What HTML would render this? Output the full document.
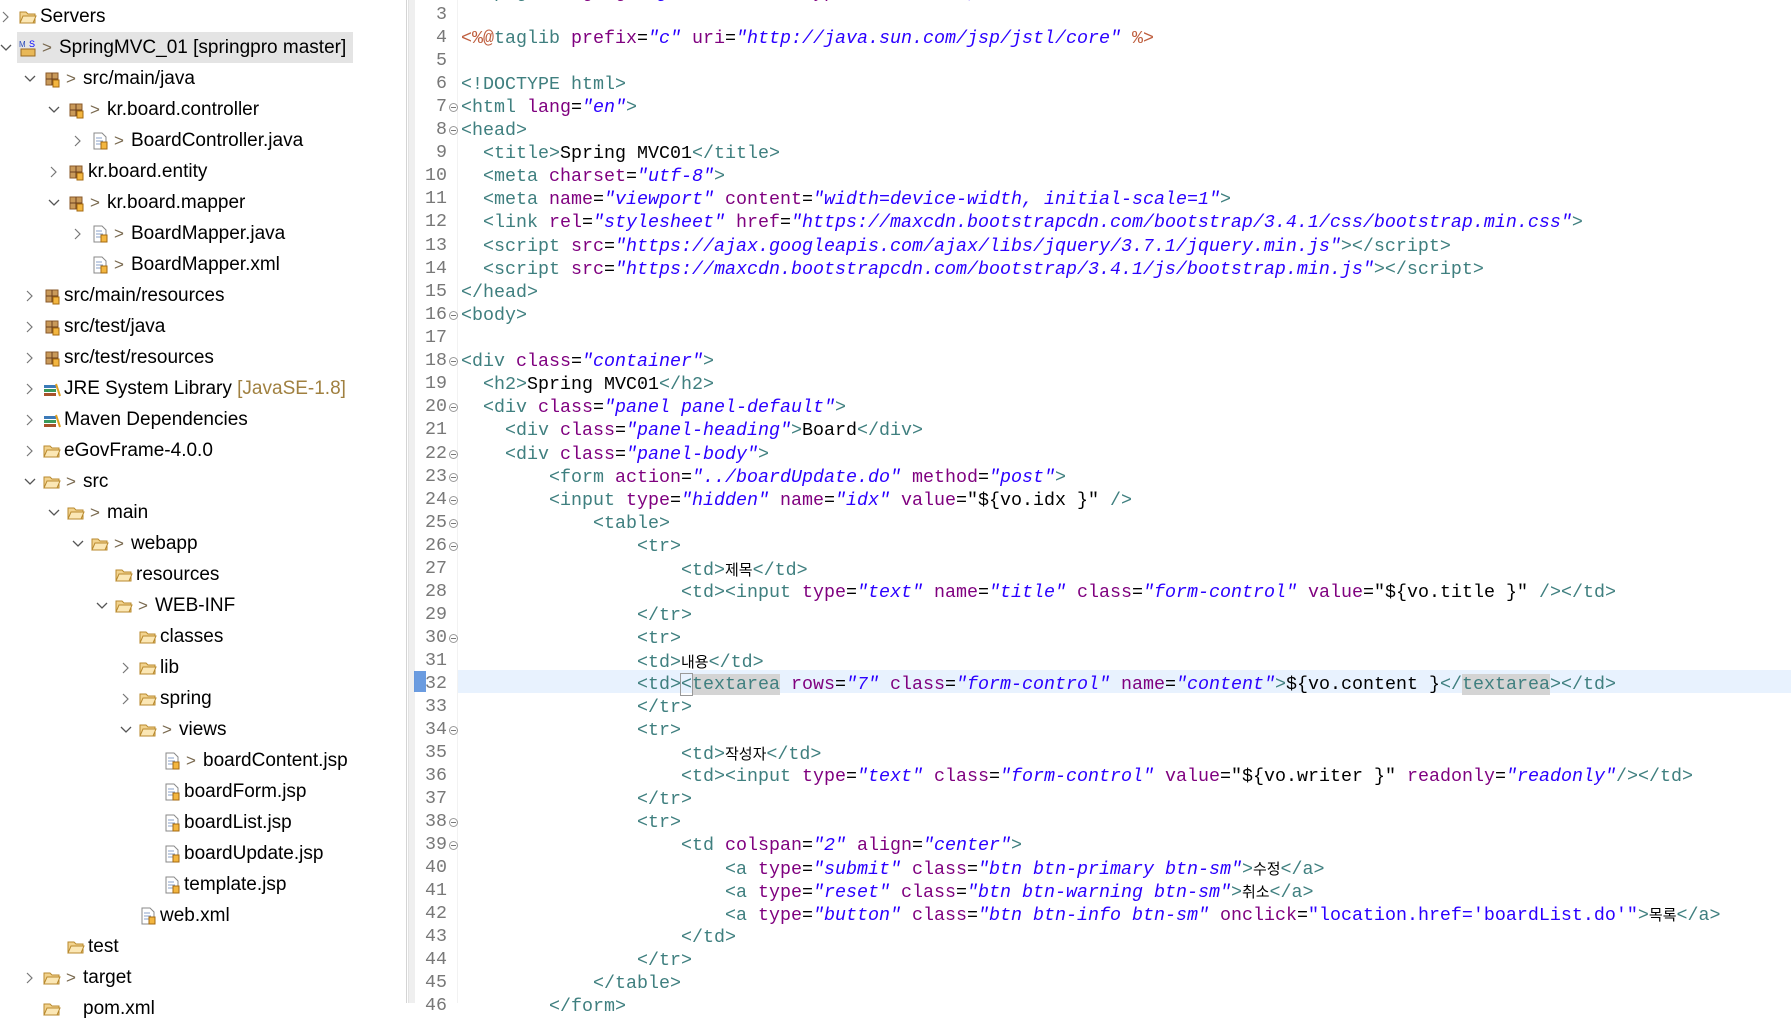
<!DOCTYPE html>
<html><head><meta charset="utf-8">
<style>
*{margin:0;padding:0;box-sizing:border-box}
body{width:1791px;height:1003px;overflow:hidden;background:#fff;position:relative;font-family:"Liberation Sans","Noto Sans CJK KR",sans-serif}
#side{position:absolute;left:0;top:0;width:407px;height:1003px;background:#fff;border-right:1px solid #d4d4d4}
.r{position:absolute;height:31px;line-height:31px;font-size:19px;color:#000;white-space:nowrap;transform:translateY(3px)}
.ch{position:absolute;top:0;width:12px;height:31px}
.ic{position:absolute;top:7px;width:18px;height:18px}
.ar{position:absolute;top:0;color:#7a6a50;font-size:17px}
.tx{position:absolute;top:0}
#sel{position:absolute;left:17px;top:32px;width:336px;height:31px;background:#e4e4e4}
#strip{position:absolute;left:408px;top:0;width:7px;height:1003px;background:#efefef;border-left:1px solid #e2e2e2}
#gutline{position:absolute;left:457px;top:0;width:1px;height:1003px;background:#f2f2f2}
#hl{position:absolute;left:458px;top:670px;width:1333px;height:23px;background:#e8f2fe}
#mark{position:absolute;left:414px;top:671px;width:12px;height:21px;background:#3a7bd5;opacity:.75}
.ln{position:absolute;left:415px;width:32px;text-align:right;font-family:"Liberation Mono",monospace;font-size:18.3px;line-height:23px;color:#787878;transform:translateY(3px)}
.fm{position:absolute;left:449px;width:9px;height:9px;border:1px solid #999;border-radius:50%;font-size:0;transform:translateY(3px)}
.fm:after{content:"";position:absolute;left:1px;top:3px;width:5px;height:1px;background:#777}
.c{position:absolute;left:461px;font-family:"Liberation Mono","Noto Sans CJK KR",monospace;font-size:18.33px;line-height:23px;white-space:pre;color:#000;transform:translateY(3px)}
.t{color:#3f7f7f}.a{color:#7f007f}.v{color:#2a00ff;font-style:italic}.d{color:#bf5f3f}.u{color:#2a00ff}
.k{font-family:"Noto Sans CJK KR",sans-serif;font-size:15px}
.g{background:#d4d4d4}
.bx{outline:1px solid #999}
</style></head><body>
<div id="side">
<div id="sel"></div>
<svg width="0" height="0" style="position:absolute">
<defs>
<symbol id="chr" viewBox="0 0 12 31"><path d="M3 11l5 5-5 5" fill="none" stroke="#777" stroke-width="1.2"/></symbol>
<symbol id="chd" viewBox="0 0 12 31"><path d="M1 13l5 5 5-5" fill="none" stroke="#555" stroke-width="1.3"/></symbol>
<symbol id="fold" viewBox="0 0 18 18"><path d="M1 4h6l2 2h7v9H1z" fill="#f2d38e" stroke="#b98a2e"/><path d="M1 15l3-7h13l-3 7z" fill="#fbe7b5" stroke="#b98a2e"/></symbol>
<symbol id="pkg" viewBox="0 0 18 18"><rect x="3" y="3" width="12" height="12" fill="#c99a5a" stroke="#8a5a2a"/><path d="M9 3v12M3 9h12" stroke="#6b4020"/><rect x="10" y="10" width="6" height="7" fill="#f3b640" stroke="#a46a10"/></symbol>
<symbol id="file" viewBox="0 0 18 18"><path d="M3 1h8l4 4v12H3z" fill="#fff" stroke="#888"/><path d="M5 6h6M5 9h7M5 12h5" stroke="#8aa0c8"/><rect x="10" y="10" width="6" height="7" fill="#f3b640" stroke="#a46a10"/></symbol>
<symbol id="lib" viewBox="0 0 18 18"><rect x="1" y="5" width="12" height="3" fill="#3c7ab8"/><rect x="1" y="9" width="12" height="3" fill="#3a9a5a"/><rect x="1" y="13" width="12" height="3" fill="#a8522a"/><path d="M13 4l4 12" stroke="#e0a020" stroke-width="2"/></symbol>
<symbol id="proj" viewBox="0 0 18 18"><text x="0" y="8" font-size="8" fill="#2a4ab8" font-family="Liberation Sans">M</text><text x="10" y="8" font-size="9" fill="#00f" font-family="Liberation Sans">S</text><rect x="2" y="10" width="14" height="7" fill="#e8b858" stroke="#9a6a20"/></symbol>
</defs></svg>

<div class="r" style="top:-2px;left:0"><svg class="ch" style="left:0"><use href="#chr"/></svg><svg class="ic" style="left:19px"><use href="#fold"/></svg><span class="tx" style="left:40px">Servers</span></div>
<div class="r" style="top:29px;left:0"><svg class="ch" style="left:0"><use href="#chd"/></svg><svg class="ic" style="left:19px"><use href="#proj"/></svg><span class="ar" style="left:42px">&gt;</span><span class="tx" style="left:59px">SpringMVC_01 [springpro master]</span></div>
<div class="r" style="top:60px;left:24px"><svg class="ch" style="left:0"><use href="#chd"/></svg><svg class="ic" style="left:19px"><use href="#pkg"/></svg><span class="ar" style="left:42px">&gt;</span><span class="tx" style="left:59px">src/main/java</span></div>
<div class="r" style="top:91px;left:48px"><svg class="ch" style="left:0"><use href="#chd"/></svg><svg class="ic" style="left:19px"><use href="#pkg"/></svg><span class="ar" style="left:42px">&gt;</span><span class="tx" style="left:59px">kr.board.controller</span></div>
<div class="r" style="top:122px;left:72px"><svg class="ch" style="left:0"><use href="#chr"/></svg><svg class="ic" style="left:19px"><use href="#file"/></svg><span class="ar" style="left:42px">&gt;</span><span class="tx" style="left:59px">BoardController.java</span></div>
<div class="r" style="top:153px;left:48px"><svg class="ch" style="left:0"><use href="#chr"/></svg><svg class="ic" style="left:19px"><use href="#pkg"/></svg><span class="tx" style="left:40px">kr.board.entity</span></div>
<div class="r" style="top:184px;left:48px"><svg class="ch" style="left:0"><use href="#chd"/></svg><svg class="ic" style="left:19px"><use href="#pkg"/></svg><span class="ar" style="left:42px">&gt;</span><span class="tx" style="left:59px">kr.board.mapper</span></div>
<div class="r" style="top:215px;left:72px"><svg class="ch" style="left:0"><use href="#chr"/></svg><svg class="ic" style="left:19px"><use href="#file"/></svg><span class="ar" style="left:42px">&gt;</span><span class="tx" style="left:59px">BoardMapper.java</span></div>
<div class="r" style="top:246px;left:72px"><svg class="ic" style="left:19px"><use href="#file"/></svg><span class="ar" style="left:42px">&gt;</span><span class="tx" style="left:59px">BoardMapper.xml</span></div>
<div class="r" style="top:277px;left:24px"><svg class="ch" style="left:0"><use href="#chr"/></svg><svg class="ic" style="left:19px"><use href="#pkg"/></svg><span class="tx" style="left:40px">src/main/resources</span></div>
<div class="r" style="top:308px;left:24px"><svg class="ch" style="left:0"><use href="#chr"/></svg><svg class="ic" style="left:19px"><use href="#pkg"/></svg><span class="tx" style="left:40px">src/test/java</span></div>
<div class="r" style="top:339px;left:24px"><svg class="ch" style="left:0"><use href="#chr"/></svg><svg class="ic" style="left:19px"><use href="#pkg"/></svg><span class="tx" style="left:40px">src/test/resources</span></div>
<div class="r" style="top:370px;left:24px"><svg class="ch" style="left:0"><use href="#chr"/></svg><svg class="ic" style="left:19px"><use href="#lib"/></svg><span class="tx" style="left:40px">JRE System Library <span style="color:#a08040">[JavaSE-1.8]</span></span></div>
<div class="r" style="top:401px;left:24px"><svg class="ch" style="left:0"><use href="#chr"/></svg><svg class="ic" style="left:19px"><use href="#lib"/></svg><span class="tx" style="left:40px">Maven Dependencies</span></div>
<div class="r" style="top:432px;left:24px"><svg class="ch" style="left:0"><use href="#chr"/></svg><svg class="ic" style="left:19px"><use href="#fold"/></svg><span class="tx" style="left:40px">eGovFrame-4.0.0</span></div>
<div class="r" style="top:463px;left:24px"><svg class="ch" style="left:0"><use href="#chd"/></svg><svg class="ic" style="left:19px"><use href="#fold"/></svg><span class="ar" style="left:42px">&gt;</span><span class="tx" style="left:59px">src</span></div>
<div class="r" style="top:494px;left:48px"><svg class="ch" style="left:0"><use href="#chd"/></svg><svg class="ic" style="left:19px"><use href="#fold"/></svg><span class="ar" style="left:42px">&gt;</span><span class="tx" style="left:59px">main</span></div>
<div class="r" style="top:525px;left:72px"><svg class="ch" style="left:0"><use href="#chd"/></svg><svg class="ic" style="left:19px"><use href="#fold"/></svg><span class="ar" style="left:42px">&gt;</span><span class="tx" style="left:59px">webapp</span></div>
<div class="r" style="top:556px;left:96px"><svg class="ic" style="left:19px"><use href="#fold"/></svg><span class="tx" style="left:40px">resources</span></div>
<div class="r" style="top:587px;left:96px"><svg class="ch" style="left:0"><use href="#chd"/></svg><svg class="ic" style="left:19px"><use href="#fold"/></svg><span class="ar" style="left:42px">&gt;</span><span class="tx" style="left:59px">WEB-INF</span></div>
<div class="r" style="top:618px;left:120px"><svg class="ic" style="left:19px"><use href="#fold"/></svg><span class="tx" style="left:40px">classes</span></div>
<div class="r" style="top:649px;left:120px"><svg class="ch" style="left:0"><use href="#chr"/></svg><svg class="ic" style="left:19px"><use href="#fold"/></svg><span class="tx" style="left:40px">lib</span></div>
<div class="r" style="top:680px;left:120px"><svg class="ch" style="left:0"><use href="#chr"/></svg><svg class="ic" style="left:19px"><use href="#fold"/></svg><span class="tx" style="left:40px">spring</span></div>
<div class="r" style="top:711px;left:120px"><svg class="ch" style="left:0"><use href="#chd"/></svg><svg class="ic" style="left:19px"><use href="#fold"/></svg><span class="ar" style="left:42px">&gt;</span><span class="tx" style="left:59px">views</span></div>
<div class="r" style="top:742px;left:144px"><svg class="ic" style="left:19px"><use href="#file"/></svg><span class="ar" style="left:42px">&gt;</span><span class="tx" style="left:59px">boardContent.jsp</span></div>
<div class="r" style="top:773px;left:144px"><svg class="ic" style="left:19px"><use href="#file"/></svg><span class="tx" style="left:40px">boardForm.jsp</span></div>
<div class="r" style="top:804px;left:144px"><svg class="ic" style="left:19px"><use href="#file"/></svg><span class="tx" style="left:40px">boardList.jsp</span></div>
<div class="r" style="top:835px;left:144px"><svg class="ic" style="left:19px"><use href="#file"/></svg><span class="tx" style="left:40px">boardUpdate.jsp</span></div>
<div class="r" style="top:866px;left:144px"><svg class="ic" style="left:19px"><use href="#file"/></svg><span class="tx" style="left:40px">template.jsp</span></div>
<div class="r" style="top:897px;left:120px"><svg class="ic" style="left:19px"><use href="#file"/></svg><span class="tx" style="left:40px">web.xml</span></div>
<div class="r" style="top:928px;left:48px"><svg class="ic" style="left:19px"><use href="#fold"/></svg><span class="tx" style="left:40px">test</span></div>
<div class="r" style="top:959px;left:24px"><svg class="ch" style="left:0"><use href="#chr"/></svg><svg class="ic" style="left:19px"><use href="#fold"/></svg><span class="ar" style="left:42px">&gt;</span><span class="tx" style="left:59px">target</span></div>
<div class="r" style="top:990px;left:24px"><svg class="ic" style="left:19px"><use href="#fold"/></svg><span class="tx" style="left:59px">pom.xml</span></div>
</div>

<div id="strip"></div>
<div id="gutline"></div>
<div id="hl"></div>
<div id="mark"></div>

<div class="ln" style="top:-22px">2</div><div class="ln" style="top:1px">3</div><div class="ln" style="top:24px">4</div><div class="ln" style="top:47px">5</div><div class="ln" style="top:70px">6</div><div class="ln" style="top:93px">7</div><div class="ln" style="top:116px">8</div><div class="ln" style="top:139px">9</div><div class="ln" style="top:162px">10</div><div class="ln" style="top:185px">11</div><div class="ln" style="top:208px">12</div><div class="ln" style="top:232px">13</div><div class="ln" style="top:255px">14</div><div class="ln" style="top:278px">15</div><div class="ln" style="top:301px">16</div><div class="ln" style="top:324px">17</div><div class="ln" style="top:347px">18</div><div class="ln" style="top:370px">19</div><div class="ln" style="top:393px">20</div><div class="ln" style="top:416px">21</div><div class="ln" style="top:440px">22</div><div class="ln" style="top:463px">23</div><div class="ln" style="top:486px">24</div><div class="ln" style="top:509px">25</div><div class="ln" style="top:532px">26</div><div class="ln" style="top:555px">27</div><div class="ln" style="top:578px">28</div><div class="ln" style="top:601px">29</div><div class="ln" style="top:624px">30</div><div class="ln" style="top:647px">31</div><div class="ln" style="top:670px">32</div><div class="ln" style="top:693px">33</div><div class="ln" style="top:716px">34</div><div class="ln" style="top:739px">35</div><div class="ln" style="top:762px">36</div><div class="ln" style="top:785px">37</div><div class="ln" style="top:808px">38</div><div class="ln" style="top:831px">39</div><div class="ln" style="top:854px">40</div><div class="ln" style="top:877px">41</div><div class="ln" style="top:900px">42</div><div class="ln" style="top:923px">43</div><div class="ln" style="top:946px">44</div><div class="ln" style="top:969px">45</div><div class="ln" style="top:992px">46</div>

<div class="fm" style="top:100px"></div><div class="fm" style="top:123px"></div><div class="fm" style="top:308px"></div><div class="fm" style="top:354px"></div><div class="fm" style="top:400px"></div><div class="fm" style="top:447px"></div><div class="fm" style="top:470px"></div><div class="fm" style="top:493px"></div><div class="fm" style="top:516px"></div><div class="fm" style="top:539px"></div><div class="fm" style="top:631px"></div><div class="fm" style="top:723px"></div><div class="fm" style="top:815px"></div><div class="fm" style="top:838px"></div>

<div class="c" style="top:-22px"><span class="d">&lt;%@</span><span class="t">page</span> <span class="a">language</span>=<span class="v">"java"</span> <span class="a">contentType</span>=<span class="v">"text/html; charset=UTF-8"</span></div>
<div class="c" style="top:24px"><span class="d">&lt;%@</span><span class="t">taglib</span> <span class="a">prefix</span>=<span class="v">"c"</span> <span class="a">uri</span>=<span class="v">"http://java.sun.com/jsp/jstl/core"</span> <span class="d">%&gt;</span></div>
<div class="c" style="top:70px"><span class="t">&lt;!DOCTYPE html&gt;</span></div>
<div class="c" style="top:93px"><span class="t">&lt;html</span> <span class="a">lang</span>=<span class="v">"en"</span><span class="t">&gt;</span></div>
<div class="c" style="top:116px"><span class="t">&lt;head&gt;</span></div>
<div class="c" style="top:139px">  <span class="t">&lt;title&gt;</span>Spring MVC01<span class="t">&lt;/title&gt;</span></div>
<div class="c" style="top:162px">  <span class="t">&lt;meta</span> <span class="a">charset</span>=<span class="v">"utf-8"</span><span class="t">&gt;</span></div>
<div class="c" style="top:185px">  <span class="t">&lt;meta</span> <span class="a">name</span>=<span class="v">"viewport"</span> <span class="a">content</span>=<span class="v">"width=device-width, initial-scale=1"</span><span class="t">&gt;</span></div>
<div class="c" style="top:208px">  <span class="t">&lt;link</span> <span class="a">rel</span>=<span class="v">"stylesheet"</span> <span class="a">href</span>=<span class="v">"https://maxcdn.bootstrapcdn.com/bootstrap/3.4.1/css/bootstrap.min.css"</span><span class="t">&gt;</span></div>
<div class="c" style="top:232px">  <span class="t">&lt;script</span> <span class="a">src</span>=<span class="v">"https://ajax.googleapis.com/ajax/libs/jquery/3.7.1/jquery.min.js"</span><span class="t">&gt;&lt;/script&gt;</span></div>
<div class="c" style="top:255px">  <span class="t">&lt;script</span> <span class="a">src</span>=<span class="v">"https://maxcdn.bootstrapcdn.com/bootstrap/3.4.1/js/bootstrap.min.js"</span><span class="t">&gt;&lt;/script&gt;</span></div>
<div class="c" style="top:278px"><span class="t">&lt;/head&gt;</span></div>
<div class="c" style="top:301px"><span class="t">&lt;body&gt;</span></div>
<div class="c" style="top:347px"><span class="t">&lt;div</span> <span class="a">class</span>=<span class="v">"container"</span><span class="t">&gt;</span></div>
<div class="c" style="top:370px">  <span class="t">&lt;h2&gt;</span>Spring MVC01<span class="t">&lt;/h2&gt;</span></div>
<div class="c" style="top:393px">  <span class="t">&lt;div</span> <span class="a">class</span>=<span class="v">"panel panel-default"</span><span class="t">&gt;</span></div>
<div class="c" style="top:416px">    <span class="t">&lt;div</span> <span class="a">class</span>=<span class="v">"panel-heading"</span><span class="t">&gt;</span>Board<span class="t">&lt;/div&gt;</span></div>
<div class="c" style="top:440px">    <span class="t">&lt;div</span> <span class="a">class</span>=<span class="v">"panel-body"</span><span class="t">&gt;</span></div>
<div class="c" style="top:463px">        <span class="t">&lt;form</span> <span class="a">action</span>=<span class="v">"../boardUpdate.do"</span> <span class="a">method</span>=<span class="v">"post"</span><span class="t">&gt;</span></div>
<div class="c" style="top:486px">        <span class="t">&lt;input</span> <span class="a">type</span>=<span class="v">"hidden"</span> <span class="a">name</span>=<span class="v">"idx"</span> <span class="a">value</span>="${vo.idx }" <span class="t">/&gt;</span></div>
<div class="c" style="top:509px">            <span class="t">&lt;table&gt;</span></div>
<div class="c" style="top:532px">                <span class="t">&lt;tr&gt;</span></div>
<div class="c" style="top:555px">                    <span class="t">&lt;td&gt;</span><span class="k">제목</span><span class="t">&lt;/td&gt;</span></div>
<div class="c" style="top:578px">                    <span class="t">&lt;td&gt;&lt;input</span> <span class="a">type</span>=<span class="v">"text"</span> <span class="a">name</span>=<span class="v">"title"</span> <span class="a">class</span>=<span class="v">"form-control"</span> <span class="a">value</span>="${vo.title }" <span class="t">/&gt;&lt;/td&gt;</span></div>
<div class="c" style="top:601px">                <span class="t">&lt;/tr&gt;</span></div>
<div class="c" style="top:624px">                <span class="t">&lt;tr&gt;</span></div>
<div class="c" style="top:647px">                <span class="t">&lt;td&gt;</span><span class="k">내용</span><span class="t">&lt;/td&gt;</span></div>
<div class="c" style="top:670px">                <span class="t">&lt;td&gt;<span class="bx">&lt;</span><span class="g">textarea</span></span> <span class="a">rows</span>=<span class="v">"7"</span> <span class="a">class</span>=<span class="v">"form-control"</span> <span class="a">name</span>=<span class="v">"content"</span><span class="t">&gt;</span>${vo.content }<span class="t">&lt;/<span class="g">textarea</span>&gt;&lt;/td&gt;</span></div>
<div class="c" style="top:693px">                <span class="t">&lt;/tr&gt;</span></div>
<div class="c" style="top:716px">                <span class="t">&lt;tr&gt;</span></div>
<div class="c" style="top:739px">                    <span class="t">&lt;td&gt;</span><span class="k">작성자</span><span class="t">&lt;/td&gt;</span></div>
<div class="c" style="top:762px">                    <span class="t">&lt;td&gt;&lt;input</span> <span class="a">type</span>=<span class="v">"text"</span> <span class="a">class</span>=<span class="v">"form-control"</span> <span class="a">value</span>="${vo.writer }" <span class="a">readonly</span>=<span class="v">"readonly"</span><span class="t">/&gt;&lt;/td&gt;</span></div>
<div class="c" style="top:785px">                <span class="t">&lt;/tr&gt;</span></div>
<div class="c" style="top:808px">                <span class="t">&lt;tr&gt;</span></div>
<div class="c" style="top:831px">                    <span class="t">&lt;td</span> <span class="a">colspan</span>=<span class="v">"2"</span> <span class="a">align</span>=<span class="v">"center"</span><span class="t">&gt;</span></div>
<div class="c" style="top:854px">                        <span class="t">&lt;a</span> <span class="a">type</span>=<span class="v">"submit"</span> <span class="a">class</span>=<span class="v">"btn btn-primary btn-sm"</span><span class="t">&gt;</span><span class="k">수정</span><span class="t">&lt;/a&gt;</span></div>
<div class="c" style="top:877px">                        <span class="t">&lt;a</span> <span class="a">type</span>=<span class="v">"reset"</span> <span class="a">class</span>=<span class="v">"btn btn-warning btn-sm"</span><span class="t">&gt;</span><span class="k">취소</span><span class="t">&lt;/a&gt;</span></div>
<div class="c" style="top:900px">                        <span class="t">&lt;a</span> <span class="a">type</span>=<span class="v">"button"</span> <span class="a">class</span>=<span class="v">"btn btn-info btn-sm"</span> <span class="a">onclick</span>=<span class="u">"location.href='boardList.do'"</span><span class="t">&gt;</span><span class="k">목록</span><span class="t">&lt;/a&gt;</span></div>
<div class="c" style="top:923px">                    <span class="t">&lt;/td&gt;</span></div>
<div class="c" style="top:946px">                <span class="t">&lt;/tr&gt;</span></div>
<div class="c" style="top:969px">            <span class="t">&lt;/table&gt;</span></div>
<div class="c" style="top:992px">        <span class="t">&lt;/form&gt;</span></div>
</body></html>
